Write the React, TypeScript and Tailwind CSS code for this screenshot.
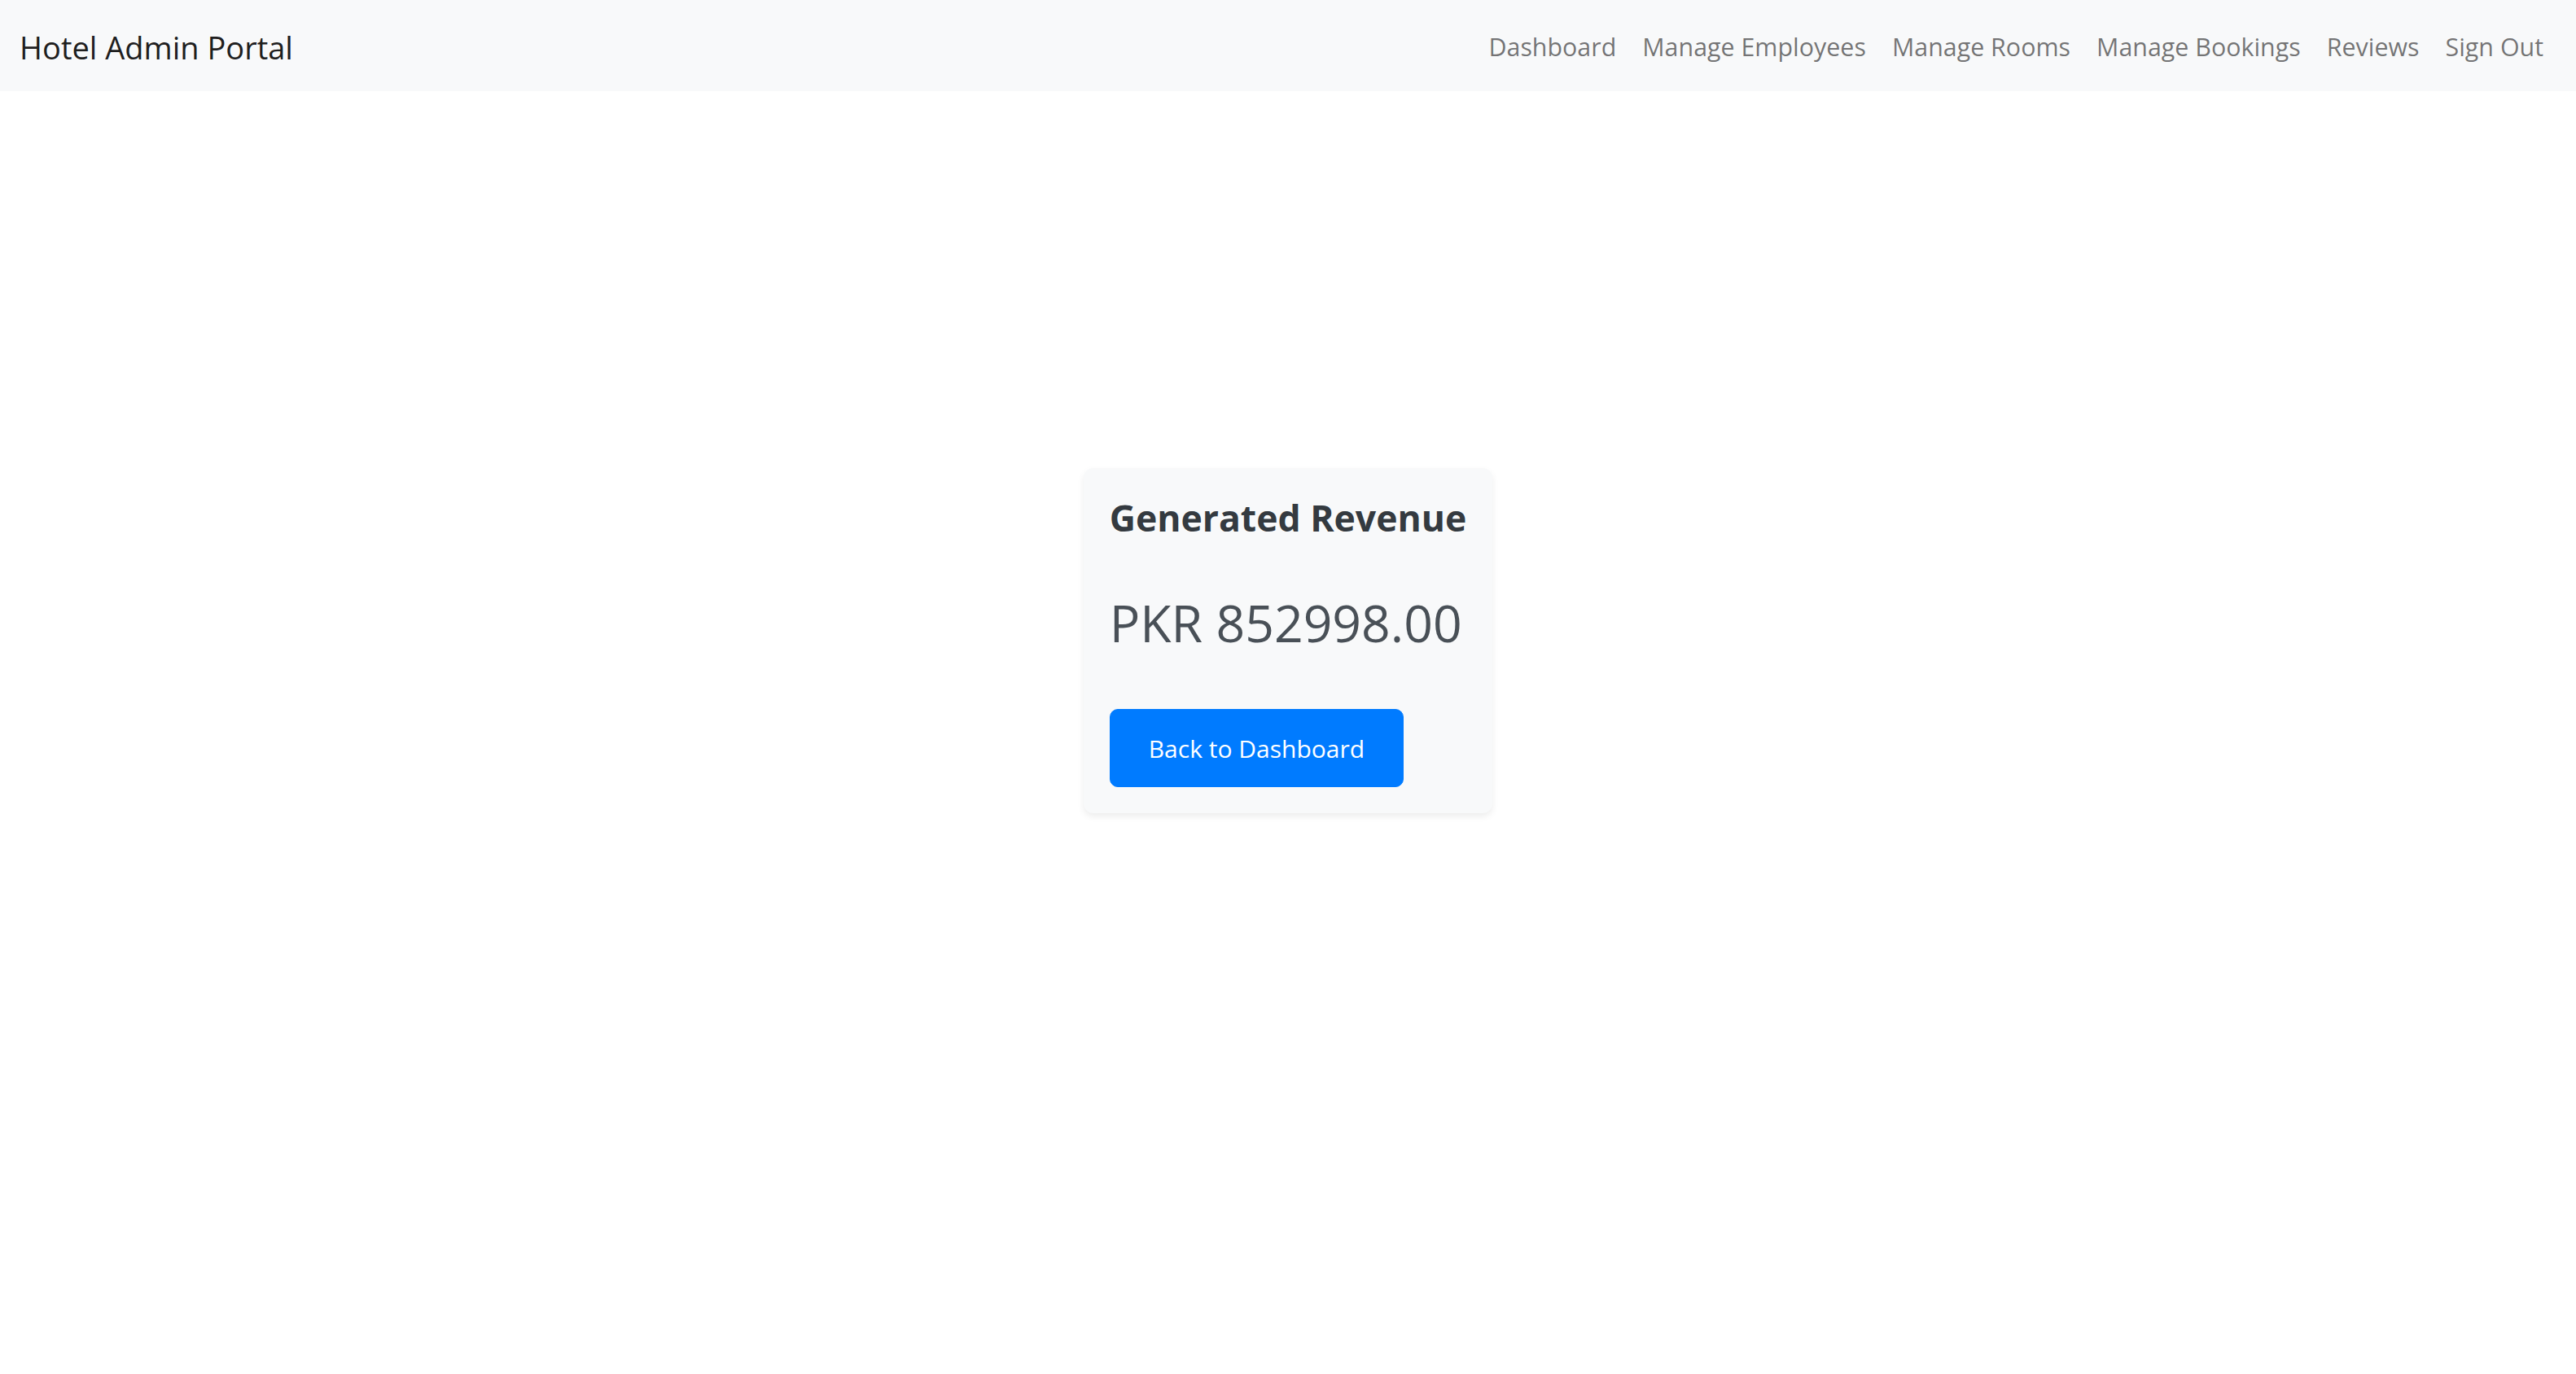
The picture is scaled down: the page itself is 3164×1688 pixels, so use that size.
import React from 'react';

// Admin revenue page: top navbar + centered revenue card

const navLinks = ['Dashboard', 'Manage Employees', 'Manage Rooms', 'Manage Bookings', 'Reviews', 'Sign Out'];

const Navbar: React.FC = () => (
  <nav className="bg-[#f8f9fa] h-[112px] flex items-center justify-between px-[24px] pt-[4px]">
    <a className="text-[38px] leading-[60px] text-black/90">Hotel Admin Portal</a>
    <ul className="flex items-center">
      {navLinks.map((link) => (
        <li key={link}>
          <a className="block px-[16px] py-[16px] text-[30.4px] leading-[48px] text-black/55">{link}</a>
        </li>
      ))}
    </ul>
  </nav>
);

const RevenueCard: React.FC<{ amount: number }> = ({ amount }) => (
  <div className="bg-[#f8f9fa] rounded-[12px] shadow-[0_4px_8px_rgba(0,0,0,0.075)] p-[32px] flex flex-col items-start">
    <h4 className="text-[44.5px] leading-[57.6px] font-bold text-[#343a40]">Generated Revenue</h4>
    <h2 className="mt-[62px] text-[62.5px] leading-[76.8px] font-medium text-[#495057]">PKR {amount.toFixed(2)}</h2>
    <button className="mt-[68px] bg-[#007bff] text-white text-[30px] leading-[48px] px-[47px] pt-[24px] pb-[22px] rounded-[10px] border border-[#007bff]">
      Back to Dashboard
    </button>
  </div>
);

export default function App() {
  return (
    <div className="min-h-screen bg-white font-['Open_Sans',sans-serif]">
      <Navbar />
      <main className="flex justify-center pt-[463px]">
        <RevenueCard amount={852998} />
      </main>
    </div>
  );
}
